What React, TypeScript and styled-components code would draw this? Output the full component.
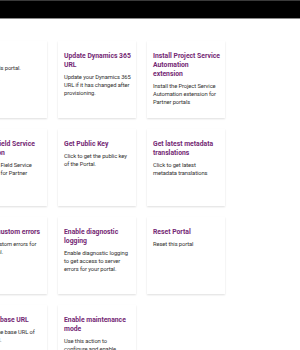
import React from "react";
import styled, { createGlobalStyle } from "styled-components";

const Global = createGlobalStyle`
  html, body { margin: 0; padding: 0; background: #ffffff; overflow: hidden; }
  body { font-family: Roboto, Lato, "Liberation Sans", sans-serif; }
`;

const Page = styled.div`
  width: 300px;
  height: 350px;
  overflow: hidden;
  display: flex;
  flex-direction: column;
  background: #fff;
`;

const TopBar = styled.div`
  flex: 0 0 auto;
  height: 17px;
  background: #000;
  border-top: 1px solid #3a3a3a;
  border-bottom: 1px solid #8a8a8a;
`;

const Grid = styled.div`
  display: grid;
  grid-template-columns: repeat(3, 78px);
  grid-auto-rows: 77px;
  column-gap: 11px;
  row-gap: 11px;
  margin: 22px 0 0 -31px;
`;

const Card = styled.div`
  background: #fff;
  box-shadow: 0 0.8px 1.8px rgba(0, 0, 0, 0.13), 0 0.2px 0.5px rgba(0, 0, 0, 0.11);
  padding: 11px 5px 0 6px;
  display: flex;
  flex-direction: column;
  gap: 3px;
  overflow: hidden;
`;

const Title = styled.div`
  font-size: 6.8px;
  line-height: 9px;
  font-weight: 700;
  color: #742774;
`;

const Desc = styled.div`
  font-size: 5.8px;
  line-height: 8px;
  letter-spacing: -0.1px;
  color: #323130;
`;

const items = [
  ["Restart", "Restart this portal."],
  ["Update Dynamics 365 URL", "Update your Dynamics 365 URL if it has changed after provisioning."],
  ["Install Project Service Automation extension", "Install the Project Service Automation extension for Partner portals"],
  ["Install Field Service extension", "Install the Field Service extension for Partner portals"],
  ["Get Public Key", "Click to get the public key of the Portal."],
  ["Get latest metadata translations", "Click to get latest metadata translations"],
  ["Enable custom errors", "Enable custom errors for your portal."],
  ["Enable diagnostic logging", "Enable diagnostic logging to get access to server errors for your portal."],
  ["Reset Portal", "Reset this portal"],
  ["Change base URL", "Change the base URL of this portal."],
  ["Enable maintenance mode", "Use this action to configure and enable maintenance mode for your portal."],
];

export default function App() {
  return (
    <Page>
      <Global />
      <TopBar />
      <Grid>
        {items.map(([t, d]) => (
          <Card key={t}>
            <Title>{t}</Title>
            <Desc>{d}</Desc>
          </Card>
        ))}
      </Grid>
    </Page>
  );
}
